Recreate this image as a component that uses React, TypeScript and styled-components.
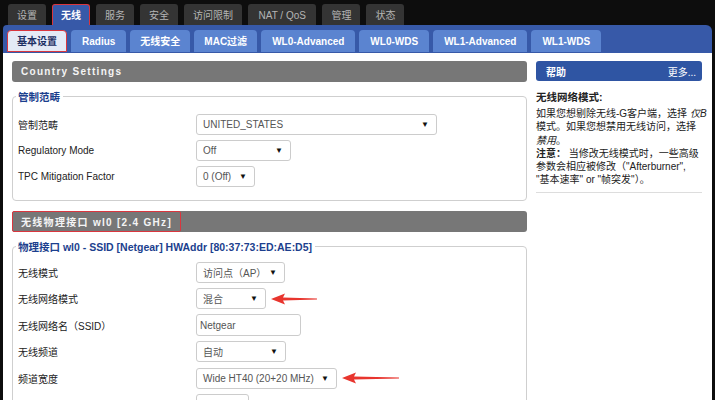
import styled, { createGlobalStyle } from "styled-components";

const GlobalStyle = createGlobalStyle`
  html, body {
    margin: 0;
    padding: 0;
    background: #0d0d0d;
  }
  body {
    font-family: "Liberation Sans", "Noto Sans CJK SC", sans-serif;
  }
`;

type TabProps = {
  $active?: boolean;
  $pad: number;
};

type WidthProps = {
  $w: number;
};

const Page = styled.div`
  width: 715px;
  height: 400px;
  overflow: hidden;
  background: #0d0d0d;
  font-size: 10px;
`;

const TopTabs = styled.div`
  display: flex;
  gap: 6px;
  padding: 4px 0 0 8px;
  height: 21px;
`;

const TopTab = styled.div<TabProps>`
  height: 21px;
  line-height: 21px;
  padding: 0 ${(props) => props.$pad}px;
  box-sizing: border-box;
  border-radius: 3px 3px 0 0;
  font-size: 10px;
  background: ${(props) => (props.$active ? "#3759a8" : "#343434")};
  color: ${(props) => (props.$active ? "#ffffff" : "#b4b4b4")};
  font-weight: ${(props) => (props.$active ? "bold" : "normal")};
  border: 1px solid ${(props) => (props.$active ? "#d9363e" : "transparent")};
  border-bottom: none;
`;

const Frame = styled.div`
  margin: 0 3px;
`;

const SubNav = styled.div`
  display: flex;
  gap: 4px;
  height: 28px;
  box-sizing: border-box;
  padding: 5px 5px 0 4px;
  background: #3759a8;
  border-radius: 4px 6px 0 0;
`;

const SubTab = styled.div<TabProps>`
  height: 22px;
  line-height: 21px;
  padding: 0 ${(props) => props.$pad}px;
  box-sizing: border-box;
  border-radius: 4px 4px 0 0;
  font-weight: bold;
  font-size: 10px;
  background: ${(props) => (props.$active ? "#e4eaf6" : "#5b84d0")};
  color: ${(props) => (props.$active ? "#1c2f63" : "#ffffff")};
  border: 1px solid ${(props) => (props.$active ? "#d9363e" : "transparent")};
`;

const Content = styled.div`
  display: flex;
  gap: 9px;
  padding: 8px 10px 0 9px;
  background: #ffffff;
  height: 347px;
  box-sizing: border-box;
`;

const Main = styled.div`
  width: 515px;
  flex-shrink: 0;
`;

const SectionHeader = styled.div`
  height: 21px;
  background: #777777;
  border-radius: 3px;
  display: flex;
  margin-top: ${(props: { $gap?: number }) => props.$gap ?? 0}px;
`;

const SectionTitle = styled.span<{ $marked?: boolean }>`
  display: flex;
  align-items: center;
  padding: 0 8px 0 8px;
  color: #f4f4f4;
  font-weight: bold;
  font-size: 10px;
  letter-spacing: 1.3px;
  border: 1px solid ${(props) => (props.$marked ? "#d9363e" : "transparent")};
  border-radius: 2px;
`;

const Fieldset = styled.fieldset<{ $top: number }>`
  margin: 7px 0 0 0;
  padding: ${(props) => props.$top}px 3px 11px 3px;
  border: 1px solid #cfcfcf;
  border-radius: 4px;
`;

const Legend = styled.legend`
  padding: 0 3px 0 2px;
  color: #1c3f8e;
  font-size: 10.5px;
  font-weight: bold;
`;

const Row = styled.div`
  display: flex;
  align-items: center;
  height: ${(props: { $h?: number }) => props.$h ?? 26}px;
  padding-left: 2px;
`;

const Label = styled.div`
  width: 178px;
  flex-shrink: 0;
  color: #222222;
  font-size: 10px;
`;

const SelectBox = styled.div<WidthProps>`
  width: ${(props) => props.$w}px;
  height: 21px;
  box-sizing: border-box;
  border: 1px solid #cccccc;
  border-radius: 3px;
  display: flex;
  align-items: center;
  justify-content: space-between;
  padding: 0 7px 0 6px;
  color: #555555;
  font-size: 10px;
  background: #ffffff;
`;

const Caret = styled.span`
  color: #111111;
  font-size: 8px;
`;

const TextInput = styled.input<WidthProps>`
  width: ${(props) => props.$w}px;
  height: 22px;
  box-sizing: border-box;
  border: 1px solid #cccccc;
  border-radius: 3px;
  padding: 0 3px;
  color: #555555;
  font-family: "Liberation Sans", "Noto Sans CJK SC", sans-serif;
  font-size: 10px;
  background: #ffffff;
  outline: none;
`;

const Arrow = styled.svg`
  margin-left: 5px;
  flex-shrink: 0;
`;

const Sidebar = styled.div`
  width: 166px;
  flex-shrink: 0;
`;

const HelpHeader = styled.div`
  height: 20px;
  background: #2f55a3;
  border-radius: 3px;
  display: flex;
  align-items: center;
  justify-content: space-between;
  padding: 0 6px 0 10px;
  color: #ffffff;
  font-size: 10px;
`;

const HelpTitle = styled.span`
  font-weight: bold;
`;

const HelpBody = styled.div`
  padding: 10px 0 6px;
  border-bottom: 1px solid #dddddd;
  color: #222222;
  font-size: 10px;
  line-height: 13.2px;
  white-space: nowrap;
`;

const HelpHeading = styled.div`
  font-weight: bold;
  font-size: 10.5px;
  margin-bottom: 3px;
`;

const Select = ({ w, value }: { w: number; value: string }) => (
  <SelectBox $w={w}>
    <span>{value}</span>
    <Caret>▼</Caret>
  </SelectBox>
);

const RedArrow = ({ len }: { len: number }) => (
  <Arrow width={len} height={12} viewBox={`0 0 ${len} 12`}>
    <path
      d={`M0 6 L14 0.5 L12 4.6 L${len} 5.5 L${len} 6.5 L12 7.4 L14 11.5 Z`}
      fill="#e8352e"
    />
  </Arrow>
);

const topTabs: [string, number][] = [
  ["设置", 8],
  ["无线", 8],
  ["服务", 8],
  ["安全", 8],
  ["访问限制", 8],
  ["NAT / QoS", 9.5],
  ["管理", 8],
  ["状态", 8],
];

const subTabs: [string, number][] = [
  ["基本设置", 9],
  ["Radius", 10],
  ["无线安全", 9],
  ["MAC过滤", 9],
  ["WL0-Advanced", 10],
  ["WL0-WDS", 10],
  ["WL1-Advanced", 10],
  ["WL1-WDS", 10],
];

export default function App() {
  return (
    <Page>
      <GlobalStyle />
      <TopTabs>
        {topTabs.map(([t, pad]) => (
          <TopTab key={t} $pad={pad} $active={t === "无线"}>
            {t}
          </TopTab>
        ))}
      </TopTabs>
      <Frame>
        <SubNav>
          {subTabs.map(([t, pad]) => (
            <SubTab key={t} $pad={pad} $active={t === "基本设置"}>
              {t}
            </SubTab>
          ))}
        </SubNav>
        <Content>
          <Main>
            <SectionHeader>
              <SectionTitle>Country Settings</SectionTitle>
            </SectionHeader>
            <Fieldset $top={7}>
              <Legend>管制范畴</Legend>
              <Row>
                <Label>管制范畴</Label>
                <Select w={241} value="UNITED_STATES" />
              </Row>
              <Row>
                <Label>Regulatory Mode</Label>
                <Select w={95} value="Off" />
              </Row>
              <Row>
                <Label>TPC Mitigation Factor</Label>
                <Select w={59} value="0 (Off)" />
              </Row>
            </Fieldset>
            <SectionHeader $gap={10}>
              <SectionTitle $marked>无线物理接口 wl0 [2.4 GHz]</SectionTitle>
            </SectionHeader>
            <Fieldset $top={5}>
              <Legend>物理接口 wl0 - SSID [Netgear] HWAddr [80:37:73:ED:AE:D5]</Legend>
              <Row $h={26.5}>
                <Label>无线模式</Label>
                <Select w={89} value="访问点（AP）" />
              </Row>
              <Row $h={26.5}>
                <Label>无线网络模式</Label>
                <Select w={70} value="混合" />
                <RedArrow len={46} />
              </Row>
              <Row $h={26.5}>
                <Label>无线网络名（SSID）</Label>
                <TextInput $w={105} defaultValue="Netgear" readOnly />
              </Row>
              <Row $h={26.5}>
                <Label>无线频道</Label>
                <Select w={90} value="自动" />
              </Row>
              <Row $h={26.5}>
                <Label>频道宽度</Label>
                <Select w={141} value="Wide HT40 (20+20 MHz)" />
                <RedArrow len={57} />
              </Row>
              <Row $h={26.5}>
                <Label>扩展频道</Label>
                <Select w={53} value="upper" />
              </Row>
            </Fieldset>
          </Main>
          <Sidebar>
            <HelpHeader>
              <HelpTitle>帮助</HelpTitle>
              <span>更多...</span>
            </HelpHeader>
            <HelpBody>
              <HelpHeading>无线网络模式:</HelpHeading>
              如果您想剔除无线-G客户端，选择 <i>仅B</i>
              <br />
              模式。如果您想禁用无线访问，选择
              <br />
              <i>禁用</i>。
              <br />
              <b>注意：</b> 当修改无线模式时，一些高级
              <br />
              参数会相应被修改（"Afterburner",
              <br />
              "基本速率" or "帧突发"）。
            </HelpBody>
          </Sidebar>
        </Content>
      </Frame>
    </Page>
  );
}
